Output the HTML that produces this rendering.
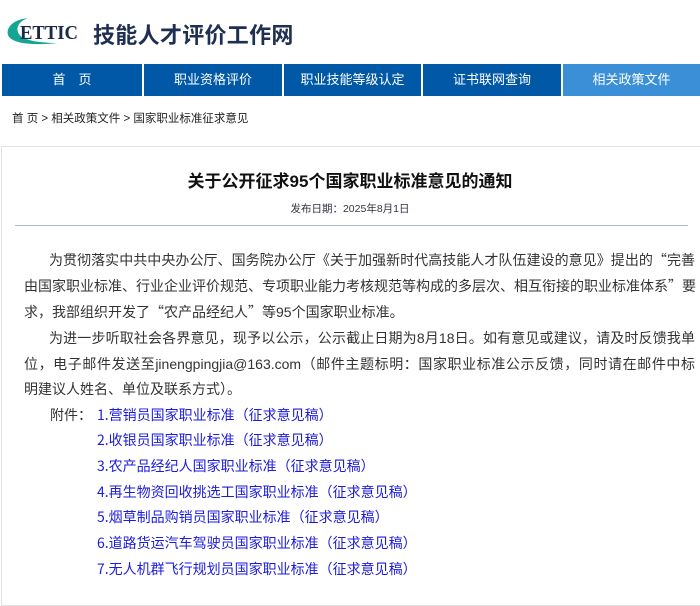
<!DOCTYPE html>
<html><head><meta charset="utf-8"><style>
*{margin:0;padding:0;box-sizing:border-box}
body{width:700px;height:582px;overflow:hidden;background:#fff;font-family:"Liberation Sans","Noto Sans CJK SC",sans-serif;color:#333;position:relative}
.abs{position:absolute;white-space:nowrap}
.nav{position:absolute;top:64px;left:2px;width:698px;height:32px;background:#0058a6}
.nav div{position:absolute;top:0;height:32px;line-height:32px;text-align:center;color:#fff;font-size:13px}
.sep{position:absolute;top:0;width:2px;height:32px;background:#fff}
.box{position:absolute;left:1px;top:146px;width:720px;height:460px;border:1px solid #e3e3e3}
.p{position:absolute;left:24px;width:671px;font-size:14px;line-height:20px;color:#333;white-space:nowrap;text-align:justify;text-align-last:justify;font-family:"Noto Sans CJK SC","Liberation Sans",sans-serif}
.p span{font-family:"Liberation Sans",sans-serif}
.l{position:absolute;left:97px;font-size:14px;line-height:20px;color:#1c1cd9;white-space:nowrap;font-family:"Noto Sans CJK SC",sans-serif}
</style></head><body>
<svg class="abs" style="left:4px;top:14px" width="80" height="34" viewBox="0 0 80 34">
<path d="M24 4 C8 6 2 14 4 21 C7 29 26 32 54 29 C34 29 16 26 14 18 C12 12 16 7 24 4Z" fill="#14a595"/>
<text x="16" y="25" font-family="Liberation Serif,serif" font-weight="bold" font-size="20" fill="#1c2a4a" textLength="58" lengthAdjust="spacingAndGlyphs">ETTIC</text>
</svg>
<div class="abs" style="left:93px;top:18px;font-size:22px;font-weight:bold;color:#1e2f52;letter-spacing:0.3px">技能人才评价工作网</div>
<div class="nav">
<div style="left:0;width:140px">首　页</div>
<span class="sep" style="left:140px"></span>
<div style="left:142px;width:138px">职业资格评价</div>
<span class="sep" style="left:280px"></span>
<div style="left:282px;width:137px">职业技能等级认定</div>
<span class="sep" style="left:419px"></span>
<div style="left:421px;width:138px">证书联网查询</div>
<span class="sep" style="left:559px"></span>
<div style="left:561px;width:137px;background:#3a8fd6">相关政策文件</div>
</div>
<div class="abs" style="left:12px;top:110px;font-size:11.5px;color:#222">首&nbsp;页 &gt; 相关政策文件 &gt; 国家职业标准征求意见</div>
<div class="box"></div>
<div class="abs" style="left:0;width:700px;top:167px;text-align:center;font-size:17px;font-weight:bold;color:#111">关于公开征求95个国家职业标准意见的通知</div>
<div class="abs" style="left:0;width:700px;top:201px;text-align:center;font-size:10.5px;color:#334">发布日期：2025年8月1日</div>
<div class="abs" style="left:15px;top:225px;width:673px;height:1px;background:#a7bdd3"></div>
<div class="p" style="top:250px;left:49px;width:646px">为贯彻落实中共中央办公厅、国务院办公厅《关于加强新时代高技能人才队伍建设的意见》提出的“完善</div>
<div class="p" style="top:276px">由国家职业标准、行业企业评价规范、专项职业能力考核规范等构成的多层次、相互衔接的职业标准体系”要</div>
<div class="p" style="top:302px;text-align-last:left">求，我部组织开发了“农产品经纪人”等<span>95</span>个国家职业标准。</div>
<div class="p" style="top:328px;left:49px;width:646px">为进一步听取社会各界意见，现予以公示，公示截止日期为<span>8</span>月<span>18</span>日。如有意见或建议，请及时反馈我单</div>
<div class="p" style="top:354px">位，电子邮件发送至<span>jinengpingjia@163.com</span>（邮件主题标明：国家职业标准公示反馈，同时请在邮件中标</div>
<div class="p" style="top:379px;text-align-last:left">明建议人姓名、单位及联系方式）。</div>
<div class="p" style="left:50px;width:60px;top:405px;text-align-last:left">附件：</div>
<div class="l" style="top:405px">1.营销员国家职业标准（征求意见稿）</div>
<div class="l" style="top:430px">2.收银员国家职业标准（征求意见稿）</div>
<div class="l" style="top:456px">3.农产品经纪人国家职业标准（征求意见稿）</div>
<div class="l" style="top:482px">4.再生物资回收挑选工国家职业标准（征求意见稿）</div>
<div class="l" style="top:507px">5.烟草制品购销员国家职业标准（征求意见稿）</div>
<div class="l" style="top:533px">6.道路货运汽车驾驶员国家职业标准（征求意见稿）</div>
<div class="l" style="top:559px">7.无人机群飞行规划员国家职业标准（征求意见稿）</div>
</body></html>
